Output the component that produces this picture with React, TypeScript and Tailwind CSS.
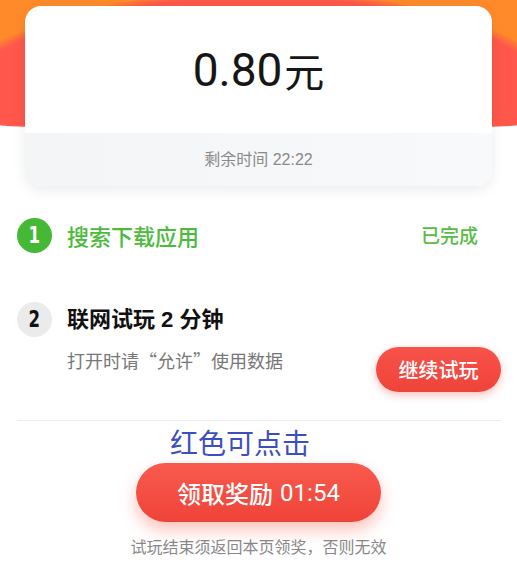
export default function App() {
	return (
		<div className="relative w-[517px] h-[565px] overflow-hidden bg-white font-['Liberation_Sans','Noto_Sans_CJK_SC',sans-serif]">
			{/* header backdrop behind the card */}
			<div className="absolute inset-x-0 top-0 h-[129px] rounded-bl-[50%_4px] rounded-br-[50%_4px] bg-[radial-gradient(335px_140px_at_50%_130px,#ff574b_95%,#ff7a35_99%,#ff8a2a_100%)]" />

			<div className="relative pt-[6px]">
				<div className="mx-[25px] overflow-hidden rounded-[16px] bg-white shadow-[0_4px_14px_rgba(0,0,0,0.08)]">
					<div className="flex h-[127px] items-center justify-center text-[#161616]">
						<span className="font-['Roboto',sans-serif] text-[46px] font-normal leading-none">0.80</span>
						<span className="ml-[2px] font-['Noto_Sans_CJK_SC',sans-serif] text-[40px] font-normal leading-none">元</span>
					</div>
					<div className="flex h-[53px] items-center justify-center bg-[linear-gradient(90deg,#f4f5f6,#f8f9fa)] text-[16px] text-[#8a8a8a]">
						剩余时间 22:22
					</div>
				</div>
			</div>

			<div className="relative pl-[17px] pr-[16px]">
				{/* step 1 */}
				<div className="mt-[32px] flex h-[35px] items-center">
					<div className="flex h-[35px] w-[35px] items-center justify-center rounded-full bg-[#45b836] font-['DejaVu_Sans_Condensed',sans-serif] text-[23px] font-bold text-white">
						<span className="inline-block scale-x-[0.8]">1</span>
					</div>
					<span className="ml-[15px] font-['Noto_Sans_CJK_SC',sans-serif] text-[22px] font-medium text-[#4cbb3b]">搜索下载应用</span>
					<span className="ml-auto mr-[23px] font-['Noto_Sans_CJK_SC',sans-serif] text-[19px] font-medium text-[#58bd47]">已完成</span>
				</div>

				{/* step 2 */}
				<div className="mt-[49px] flex">
					<div className="flex h-[35px] w-[35px] items-center justify-center rounded-full bg-[#ebebeb] font-['DejaVu_Sans_Condensed',sans-serif] text-[23px] font-bold text-[#111]">
						<span className="inline-block scale-x-[0.8]">2</span>
					</div>
					<div className="ml-[15px] flex-1">
						<div className="flex h-[35px] items-center text-[22px] font-bold text-[#111]">
							联网试玩 2 分钟
						</div>
						<div className="mt-[10px] flex items-start justify-between">
							<span className="mt-[1px] font-['Noto_Sans_CJK_SC',sans-serif] text-[18px] leading-[24px] text-[#777]">
								打开时请“允许”使用数据
							</span>
							<button className="flex h-[45px] w-[125px] items-center justify-center rounded-full bg-[linear-gradient(180deg,#f8524a,#ee4339)] font-['Noto_Sans_CJK_SC',sans-serif] text-[20px] font-medium text-white shadow-[0_3px_8px_rgba(240,70,60,0.35)]">
								继续试玩
							</button>
						</div>
					</div>
				</div>

				<div className="mt-[28px] h-px bg-[#ececec]" />
			</div>

			<div className="relative pl-[170px] pt-[8px]">
				<span className="font-['Liberation_Serif','Noto_Sans_CJK_SC',serif] text-[28px] leading-[32px] text-[#3d4fbe]">
					红色可点击
				</span>
			</div>

			<div className="relative mt-[2px] flex justify-center">
				<button className="flex h-[59px] w-[245px] items-center justify-center rounded-full bg-[linear-gradient(180deg,#fa5a4e,#ef4339)] text-[24px] text-white shadow-[0_8px_16px_rgba(250,80,60,0.35)]">
					<span className="font-['Noto_Sans_CJK_SC',sans-serif] font-medium">领取奖励</span>
					<span className="ml-[7px] font-['Roboto',sans-serif]">01:54</span>
				</button>
			</div>

			<p className="relative mt-[14px] text-center font-['Noto_Sans_CJK_SC',sans-serif] text-[16px] leading-[20px] text-[#888]">
				试玩结束须返回本页领奖，否则无效
			</p>
		</div>
	)
}
